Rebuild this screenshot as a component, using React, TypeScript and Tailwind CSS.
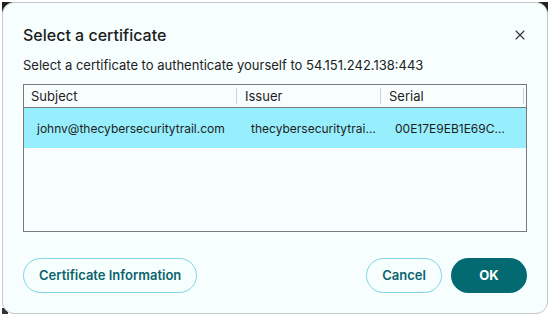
import React from 'react';
import { X } from 'lucide-react';

const font = { fontFamily: 'Inter, "Noto Sans", sans-serif' };

export default function App() {
    return (
        <div className="relative w-[550px] h-[316px] bg-white p-[2px]" style={font}>
            <div className="absolute left-[2px] top-[2px] w-[10px] h-[10px] bg-[#222]" />
            <div className="absolute right-[2px] top-[2px] w-[10px] h-[10px] bg-[#222]" />
            <div className="absolute left-[2px] bottom-[2px] w-[6px] h-[6px] bg-[#333]" />
            <div className="relative flex h-full flex-col rounded-[12px] border border-[#c4c8c8] bg-[#f6fefe] px-[20px]">
                <div className="flex items-center justify-between pt-[21px]">
                    <h1 className="text-[16px] font-medium text-[#1d1d1d] leading-[22px]">Select a certificate</h1>
                    <X className="mr-[-1px] h-[16px] w-[16px] text-[#333]" strokeWidth={1.6} />
                </div>
                <p className="mt-[10px] text-[13px] leading-[18px] text-[#222]">
                    Select a certificate to authenticate yourself to 54.151.242.138:443
                </p>
                <div className="mt-[10px] h-[148px] border border-[#7a7a7a] bg-[#f8fefe]">
                    <div className="flex h-[23px] border-b border-[#7a7a7a] text-[13px] text-[#1d1d1d]">
                        <div className="flex w-[213px] items-center border-r border-[#d0d4d4] my-[3px] pl-[7px] pt-[2px]">Subject</div>
                        <div className="flex w-[144px] items-center border-r border-[#d0d4d4] my-[3px] pl-[8px] pt-[2px]">Issuer</div>
                        <div className="flex w-[143px] items-center border-r border-[#d0d4d4] my-[3px] pl-[8px] pt-[2px]">Serial</div>
                    </div>
                    <div className="flex h-[40px] items-center bg-[#97effd] pt-[1px] text-[12px] text-[#1d1d1d]">
                        <div className="w-[213px] truncate pl-[13px]">johnv@thecybersecuritytrail.com</div>
                        <div className="w-[144px] truncate pl-[14px] pr-[4px]">thecybersecuritytrail.com</div>
                        <div className="w-[143px] truncate pl-[14px] pr-[12px]">00E17E9EB1E69C0A4F3B</div>
                    </div>
                </div>
                <div className="mt-[26px] flex items-center">
                    <button className="h-[35px] rounded-full border border-[#7fd6e6] px-[15px] text-[13px] font-semibold text-[#0b636d]">
                        Certificate Information
                    </button>
                    <div className="ml-auto flex gap-[9px]">
                        <button className="h-[35px] w-[76px] rounded-full border border-[#7fd6e6] text-[13px] font-semibold text-[#0b636d]">
                            Cancel
                        </button>
                        <button className="h-[35px] w-[76px] rounded-full bg-[#036a72] text-[13px] font-bold text-white">
                            OK
                        </button>
                    </div>
                </div>
            </div>
        </div>
    );
}
